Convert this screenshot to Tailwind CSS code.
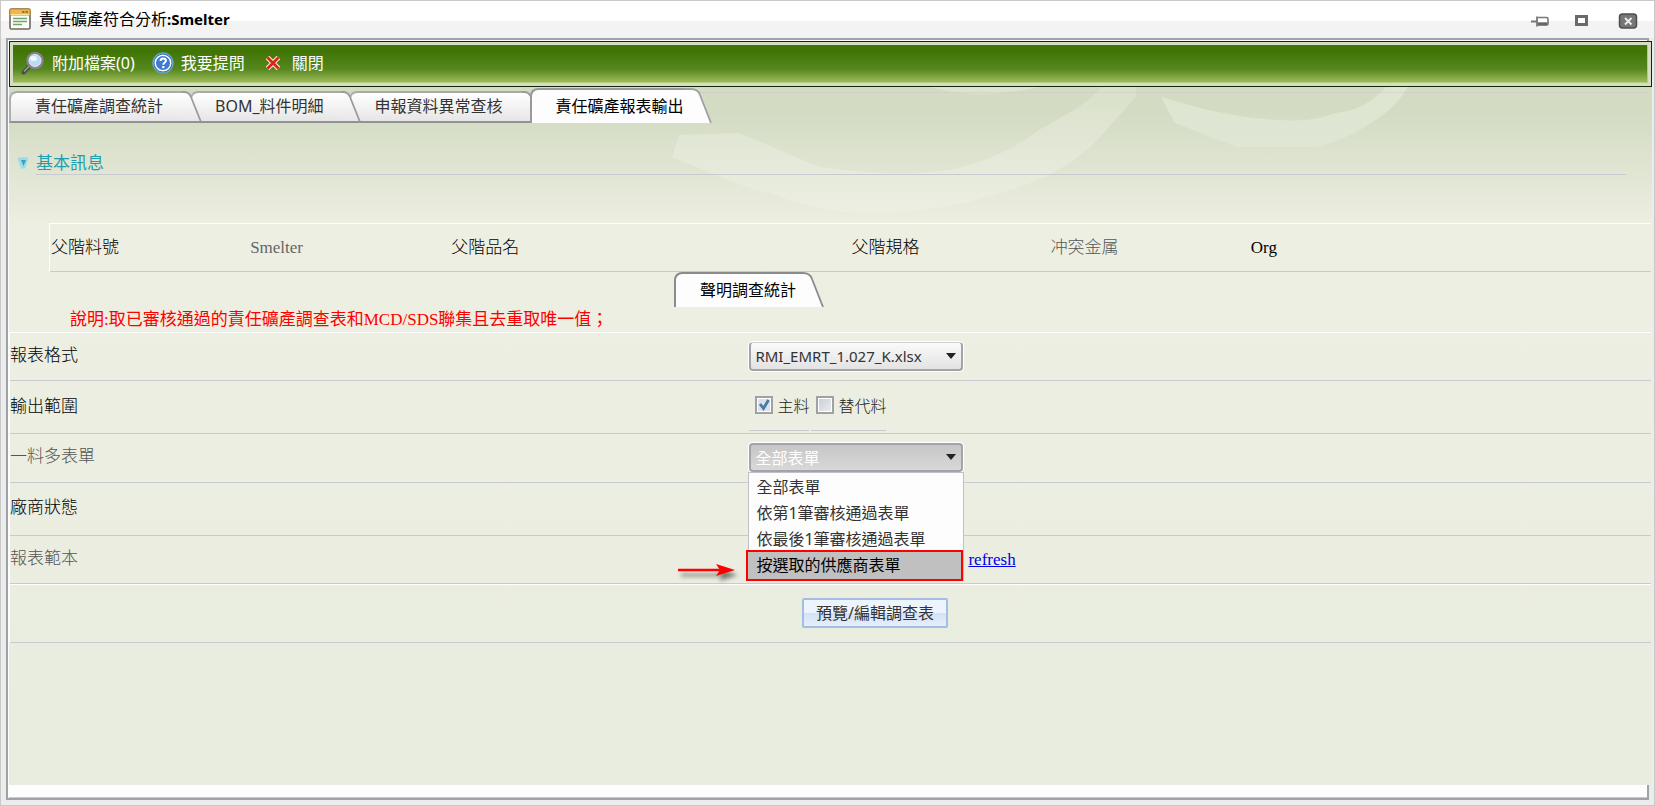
<!DOCTYPE html>
<html lang="zh-Hant">
<head>
<meta charset="utf-8">
<title>責任礦產符合分析:Smelter</title>
<script src="https://cdn.jsdelivr.net/npm/@tailwindcss/browser@4"></script>
</head>
<body class="min-h-screen flex flex-col border border-[#c9c9c9] bg-[#ececec] font-['Noto_Sans','Noto_Sans_CJK_TC',sans-serif] text-base font-light text-[#333]">

<header class="h-[37px] shrink-0 flex items-center pl-2 pr-4 pb-px bg-linear-to-b from-white from-55% to-[#f3f3f3] to-55%">
  <svg class="w-[22px] h-[22px] shrink-0" viewBox="0 0 22 22" aria-hidden="true">
    <rect x="1" y="1" width="20" height="20" rx="1.5" fill="#fdfdfa" stroke="#6f6a60" stroke-width="1.6"/>
    <path d="M1 7V2.500Q1 1 2.500 1h17Q21 1 21 2.500V7z" fill="#f2b64b" stroke="#c9852b"/>
    <path d="M1.500 6.500h19" stroke="#f8dfa4"/>
    <path d="M13 3.800h2.500m1 0H19" stroke="#7c7a30" stroke-width="1.800"/>
    <path d="M4 10.500h14M4 13.500h14M4 16.500h9" stroke="#6fa566" stroke-width="1.500"/>
  </svg>
  <h1 class="ml-2 text-base leading-6 font-normal text-black">責任礦產符合分析<b class="text-[15px] font-bold">:Smelter</b></h1>
  <div class="ml-auto flex items-center gap-6 pt-1">
    <button aria-label="釘選" class="w-5 h-5 -mr-[3px]"><svg viewBox="0 0 20 20"><path d="M1 10.500h6M7 5.500v10" stroke="#777" stroke-width="1.800" fill="none"/><path d="M8 6.500h8.500q1.500 0 1.500 1.500v5q0 1-1.500 1H8" fill="#fff" stroke="#777" stroke-width="1.600"/><path d="M8 12.800h9.500" stroke="#666" stroke-width="3"/></svg></button>
    <button aria-label="最大化" class="w-5 h-5"><svg viewBox="0 0 20 20"><rect x="5.500" y="5.500" width="10" height="8" fill="#fff" stroke="#6a6a6a" stroke-width="3"/></svg></button>
    <button aria-label="關閉視窗" class="w-5 h-5 ml-[3px]"><svg viewBox="0 0 20 20"><rect x="1.500" y="3" width="17" height="14" rx="3" fill="#777" stroke="#4e4e4e" stroke-width="1.500"/><path d="M7 7l6.500 6.500M13.500 7L7 13.500" stroke="#eee" stroke-width="1.800"/></svg></button>
  </div>
</header>

<div class="flex-1 flex flex-col mx-[5px] mb-[5px] border-2 border-[#9da3a6] bg-[#fdfdfd] pl-px pt-px">
  <div class="-mr-[5px] flex-1 flex flex-col">
    <div role="toolbar" class="h-[46px] border border-[#16260a] bg-[#d5dec5] p-[3px]">
      <div class="h-full flex items-center pl-2 pb-[2px] border-r border-b border-[#b3cb7f] bg-linear-to-b from-[#417606] from-20% via-[#55871c] via-65% to-[#9dba58] text-white font-normal leading-5">
        <button class="flex items-center gap-[7px]">
          <svg class="w-6 h-6" viewBox="0 0 24 24" aria-hidden="true"><path d="M2.500 21.500L10 14" stroke="#4c4c50" stroke-width="4" stroke-linecap="round"/><path d="M3 20.500l6-6" stroke="#a3a3a5" stroke-width="1.200"/><circle cx="14" cy="9.500" r="7.500" fill="#b9dcf2" stroke="#85858a" stroke-width="2.500"/><circle cx="14" cy="9.500" r="6" fill="none" stroke="#dde4ea" stroke-width="1"/><ellipse cx="12.500" cy="7.500" rx="3.500" ry="2.500" fill="#eef9ff"/></svg>
          <span>附加檔案(0)</span>
        </button>
        <button class="flex items-center gap-[7px] ml-[17px]">
          <svg class="w-[22px] h-[22px] mt-px" viewBox="0 0 22 22" aria-hidden="true"><circle cx="11" cy="11" r="10" fill="#2460b5" stroke="#65a4c8" stroke-width="1.500"/><circle cx="11" cy="11" r="7.800" fill="#3f7bd0" stroke="#fff" stroke-width="1.500"/><path d="M8.500 9q0-2.500 2.700-2.500t2.700 2.200c0 1.800-2.600 1.900-2.600 4" fill="none" stroke="#fff" stroke-width="2"/><rect x="10.200" y="14" width="2.200" height="2.200" fill="#fff"/></svg>
          <span>我要提問</span>
        </button>
        <button class="flex items-center gap-[11px] ml-5">
          <svg class="w-4 h-4" viewBox="0 0 16 16" aria-hidden="true"><path d="M2.500 2.500l11 11M13.500 2.500l-11 11" stroke="#f8e7d8" stroke-width="5"/><path d="M2.500 2.500l11 11M13.500 2.500l-11 11" stroke="#dd2611" stroke-width="2.800"/></svg>
          <span>關閉</span>
        </button>
      </div>
    </div>

    <main class="relative isolate flex-1 bg-linear-to-b from-[#d3dbc3] from-[24px] via-[#edefe2] via-[140px] to-[#e9eddf] to-[620px]">
      <svg class="absolute left-[660px] top-0 w-[780px] h-[140px] -z-10" viewBox="0 0 780 140" aria-hidden="true">
        <defs><linearGradient id="brush" x2="0" y2="1"><stop stop-color="#dbe2cb"/><stop offset=".6" stop-color="#e6ebdc"/><stop offset="1" stop-color="#edefe2"/></linearGradient></defs>
        <path d="M433 0C415 20 395 28 370 43 345 62 320 74 280 83 230 90 180 84 151 80 120 68 100 58 70 46L10 48 3 70C40 84 70 100 101 106c40 16 75 22 120 20 50-4 80-10 110-20 25-8 42-14 58-23 20-12 32-22 42-33l36-40V0z" fill="url(#brush)" opacity=".8"/>
        <path d="M717 0C700 18 685 24 666 26c-20 8-38 8-58 7-30-2-50-6-77-12L492 10l14 26c22 8 42 18 64 24h77c26-6 44-16 64-30 12-8 20-18 28-30z" fill="#dfe6d3" opacity=".85"/>
        <path d="M260 0q50 14 110 0z" fill="#dfe6d3" opacity=".8"/>
      </svg>

      <div role="tablist" class="flex items-end h-9 mr-[3px] bg-linear-to-b from-transparent from-[5px] via-[#c9cad0] via-[5px] to-transparent to-[6px]">
        <button role="tab" class="relative z-30 h-8 flex">
          <span class="h-full rounded-tl-lg border-t-2 border-l-2 border-b-2 border-[#929292] border-t-[#a9a9a9] border-l-[#b0b0b0] bg-linear-to-b from-white to-[#e6e6e6] pl-6 pr-[19px] leading-[26px] font-normal">責任礦產調查統計</span>
          <svg class="w-5 h-8" viewBox="0 0 20 32" aria-hidden="true"><path d="M0 1h2q5 0 7 5l10 25H0z" fill="url(#tabFill)"/><path d="M0 1h2q5 0 7 5l10 25" fill="none" stroke="#9b9b9b" stroke-width="1.800"/><path d="M0 31h19" stroke="#929292" stroke-width="2"/><defs><linearGradient id="tabFill" x2="0" y2="1"><stop stop-color="#fff"/><stop offset="1" stop-color="#e6e6e6"/></linearGradient></defs></svg>
        </button>
        <button role="tab" class="relative z-20 h-8 flex -ml-3">
          <span class="h-full rounded-tl-lg border-t-2 border-l-2 border-b-2 border-[#929292] border-t-[#a9a9a9] border-l-[#b0b0b0] bg-linear-to-b from-white to-[#e6e6e6] pl-[23px] pr-[17px] leading-[26px] font-normal">BOM_料件明細</span>
          <svg class="w-5 h-8" viewBox="0 0 20 32" aria-hidden="true"><path d="M0 1h2q5 0 7 5l10 25H0z" fill="url(#tabFill)"/><path d="M0 1h2q5 0 7 5l10 25" fill="none" stroke="#9b9b9b" stroke-width="1.800"/><path d="M0 31h19" stroke="#929292" stroke-width="2"/></svg>
        </button>
        <button role="tab" class="relative z-10 h-8 flex -ml-3">
          <span class="h-full rounded-tl-lg border-t-2 border-l-2 border-b-2 border-[#929292] border-t-[#a9a9a9] border-l-[#b0b0b0] bg-linear-to-b from-white to-[#e6e6e6] pl-6 pr-[19px] leading-[26px] font-normal">申報資料異常查核</span>
          <svg class="w-5 h-8" viewBox="0 0 20 32" aria-hidden="true"><path d="M0 1h2q5 0 7 5l10 25H0z" fill="url(#tabFill)"/><path d="M0 1h2q5 0 7 5l10 25" fill="none" stroke="#9b9b9b" stroke-width="1.800"/><path d="M0 31h19" stroke="#929292" stroke-width="2"/></svg>
        </button>
        <button role="tab" aria-selected="true" class="relative z-40 h-[35px] flex -ml-3">
          <span class="h-full rounded-tl-lg border-t-2 border-l-2 border-[#999] bg-[#fdfdfd] pl-6 leading-8 font-normal text-black">責任礦產報表輸出</span>
          <svg class="w-7 h-[35px]" viewBox="0 0 28 35" aria-hidden="true"><path d="M0 1h7q7 0 9 6l11 28H0z" fill="#fdfdfd"/><path d="M0 1h7q7 0 9 6l11 28" fill="none" stroke="#a0a0a0" stroke-width="1.800"/></svg>
        </button>
      </div>

      <section class="pt-6">
        <h2 class="flex items-start ml-2 mr-[26px] text-[17px] leading-8 font-normal text-[#1f9dac]">
          <svg class="w-3 h-3 mt-[10px] mr-[7px]" viewBox="0 0 12 12" aria-hidden="true"><path d="M.5 1.500q0-1.500 5.500-1.500t5.500 1.500L8 11.500H4z" fill="#9bdcec"/><path d="M4 3h5L6.500 9z" fill="#37a3bb"/></svg>
          <span class="flex-1 border-b border-[#c9cad0] h-7">基本訊息</span>
        </h2>
        <table class="table-fixed mt-12 ml-10 w-[calc(100%-41px)] border-t border-l border-t-white border-l-white font-['Liberation_Serif','Noto_Sans_CJK_TC',serif] text-[17px] leading-6 text-black border-separate border-spacing-0">
          <tr class="h-12 text-left">
            <th class="pl-px font-light border-b border-[#c9cad0]">父階料號</th>
            <td class="border-b border-[#c9cad0] text-[#666]">Smelter</td>
            <th class="pl-px font-light border-b border-[#c9cad0]">父階品名</th>
            <td class="border-b border-[#c9cad0]"></td>
            <th class="pl-px font-light border-b border-[#c9cad0]">父階規格</th>
            <td class="border-b border-[#c9cad0] text-[#555]" lang="zh-Hans">冲突金属</td>
            <td class="border-b border-[#c9cad0]">Org</td>
            <td class="border-b border-[#c9cad0]"></td>
          </tr>
        </table>
      </section>

      <div role="tablist" class="flex justify-center pl-[2px] mr-[165px]">
        <button role="tab" aria-selected="true" class="h-[35px] flex">
          <span class="h-full rounded-tl-lg border-t-2 border-l-2 border-[#8b8b8b] bg-[#fdfdfd] pl-6 leading-8 font-normal text-black">聲明調查統計</span>
          <svg class="w-7 h-[35px]" viewBox="0 0 28 35" aria-hidden="true"><path d="M0 1h7q7 0 9 6l11 28H0z" fill="#fdfdfd"/><path d="M0 1h7q7 0 9 6l11 28" fill="none" stroke="#8b8b8b" stroke-width="1.800"/></svg>
        </button>
      </div>

      <form class="font-['Liberation_Serif','Noto_Sans_CJK_TC',serif] text-[17px] leading-6 text-black">
        <p class="h-[25px] pt-px pl-[61px] text-[#f00] font-normal">說明:取已審核通過的責任礦產調查表和MCD/SDS聯集且去重取唯一值；</p>
        <div class="mr-px border-t border-l border-white">
          <div class="grid grid-cols-[45%_1fr] h-12 border-b border-[#c9cad0]">
            <label for="format" class="pt-[11px]">報表格式</label>
            <div class="pt-2">
              <div class="relative w-[216px] border border-white rounded-sm">
                <select id="format" class="appearance-none block w-full h-[29px] rounded-sm border-2 border-t border-[#a3a4a9] border-t-[#d0d0d2] bg-linear-to-b from-[#fafafa] to-[#e3e3e3] pl-1 font-['Noto_Sans','Noto_Sans_CJK_TC',sans-serif] text-[15px] leading-6 font-normal text-[#333]"><option>RMI_EMRT_1.027_K.xlsx</option></select>
                <svg class="absolute right-[7px] top-[11px] w-[10px] h-[6px] pointer-events-none" viewBox="0 0 10 6" aria-hidden="true"><path d="M0 0h10L5 6z" fill="#222"/></svg>
              </div>
            </div>
          </div>
          <div class="grid grid-cols-[45%_1fr] h-[53px] border-b border-[#c9cad0]">
            <span class="pt-[14px]">輸出範圍</span>
            <div class="flex gap-[2px] pt-[11px] pl-px font-['Noto_Sans','Noto_Sans_CJK_TC',sans-serif] text-base">
              <label class="flex items-start h-[39px] pl-[6px] pt-[2px] border-b border-[#c9cad0] text-[#222]"><input type="checkbox" checked class="appearance-none w-[18px] h-[18px] mt-[2px] mr-1 shrink-0 border-2 border-[#a0a1a5] outline-1 outline-white -outline-offset-3 bg-[#dce2e8]"><svg class="w-4 h-4 -ml-[21px] mr-[5px] mt-[2px] pointer-events-none" viewBox="0 0 16 16" aria-hidden="true"><path d="M4 8l3.500 4.500L12.500 4" fill="none" stroke="#4a7ba6" stroke-width="2.800"/></svg>主料</label>
              <label class="flex items-start h-[39px] pl-[5px] pt-[2px] border-b border-[#c9cad0] text-[#222]"><input type="checkbox" class="appearance-none w-[18px] h-[18px] mt-[2px] mr-1 shrink-0 border-2 border-[#a0a1a5] outline-1 outline-white -outline-offset-3 bg-linear-to-br from-[#c8ced8] to-[#eceef0]">替代料</label>
            </div>
          </div>
          <div class="grid grid-cols-[45%_1fr] h-[49px] border-b border-[#c9cad0]">
            <label for="multi" class="pt-[11px] text-[#555]">一料多表單</label>
            <div class="pt-2">
              <div class="relative z-10 w-[216px] border border-white rounded-sm font-['Noto_Sans','Noto_Sans_CJK_TC',sans-serif] text-base">
                <select id="multi" class="appearance-none block w-full h-[29px] rounded-sm border-2 border-[#a3a4a9] bg-linear-to-b from-[#c6c6c6] to-[#d8d8d8] pl-1 leading-6 font-normal text-white"><option>全部表單</option></select>
                <svg class="absolute right-[7px] top-[11px] w-[10px] h-[6px] pointer-events-none" viewBox="0 0 10 6" aria-hidden="true"><path d="M0 0h10L5 6z" fill="#222"/></svg>
                <ul role="listbox" aria-label="一料多表單" class="absolute -left-px -right-px top-full border border-[#bfc0c6] bg-[#fdfdfd] text-[#333] leading-[26px] font-normal pt-px">
                  <li role="option" class="pl-[7px]">全部表單</li>
                  <li role="option" class="pl-[7px]">依第1筆審核通過表單</li>
                  <li role="option" class="pl-[7px]">依最後1筆審核通過表單</li>
                  <li role="option" aria-selected="true" class="relative -ml-[3px] -mt-[2px] -mb-px border-2 border-[#f00] bg-[#c0c0c0] pl-2 leading-[27px] text-black">按選取的供應商表單
                    <svg class="absolute -left-[70px] top-[8px] w-[66px] h-7 drop-shadow-[3px_5px_2px_rgba(0,0,0,.5)]" viewBox="0 0 66 28" aria-hidden="true"><path d="M0 10h42" stroke="#f00" stroke-width="2.500"/><path d="M57 10L38 4l4 6-4 6z" fill="#f00"/></svg>
                  </li>
                </ul>
              </div>
            </div>
          </div>
          <div class="grid grid-cols-[45%_1fr] h-[53px] border-b border-[#c9cad0]">
            <span class="pt-[13px]">廠商狀態</span>
            <div></div>
          </div>
          <div class="grid grid-cols-[45%_1fr] h-12 border-b border-[#c9cad0]">
            <span class="pt-[11px] text-[#555]">報表範本</span>
            <div class="pl-[220px] pt-3"><a href="#" class="text-[#0000ee] underline">refresh</a></div>
          </div>
          <div class="flex justify-center pl-[89px] pt-[13px] h-[59px] border-t border-b border-t-white border-[#c9cad0]">
            <button type="button" class="h-[30px] px-3 rounded-xs border-2 border-[#a3bde3] bg-linear-to-b from-[#eef4fc] from-50% via-[#d3e2f6] via-50% to-[#e6effb] font-['Noto_Sans','Noto_Sans_CJK_TC',sans-serif] text-base leading-6 font-normal text-[#333]">預覽/編輯調查表</button>
          </div>
        </div>
      </form>
    </main>
  </div>
  <footer class="h-[13px] border-b border-[#c9c9c9]"></footer>
</div>
</body>
</html>
